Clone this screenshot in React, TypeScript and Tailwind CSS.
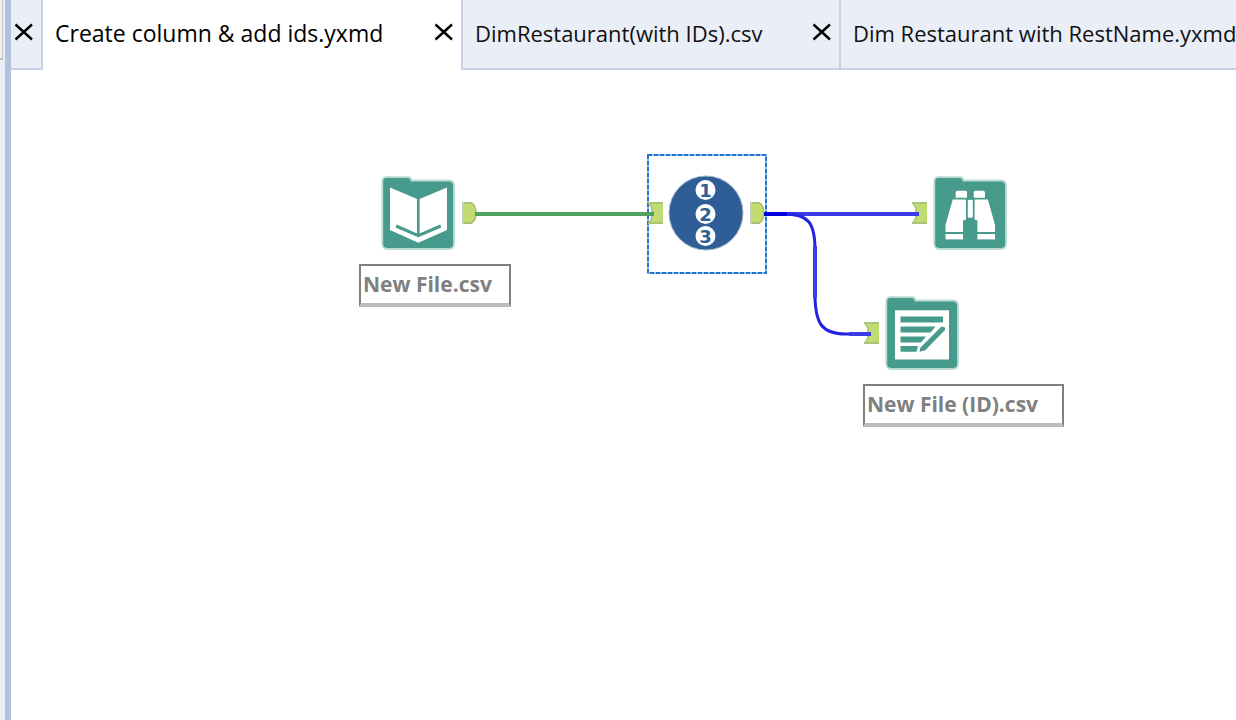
import React from "react";

const tabs = [
  { title: "Create column & add ids.yxmd", active: true, width: "w-[418px]" },
  { title: "DimRestaurant(with IDs).csv", active: false, width: "w-[378px]" },
  { title: "Dim Restaurant with RestName.yxmd", active: false, width: "w-[480px]" },
];

function CloseButton({ label }: { label: string }) {
  return (
    <button type="button" aria-label={label} className="shrink-0">
      <svg width="20" height="20" viewBox="0 0 20 20" fill="none" stroke="#000" strokeWidth="2.4">
        <path d="M2.5 2.5 19 17.5M19 2.5 2.5 17.5" />
      </svg>
    </button>
  );
}

function Folder({ children }: { children: React.ReactNode }) {
  return (
    <svg width="74" height="74" viewBox="0 0 74 74" className="block">
      <path
        d="M5.5 1.2H27Q30 1.2 30.5 4.5H67.5Q73 4.5 73 10V67.5Q73 73 67.5 73H7Q1.3 73 1.3 67.5V5.5Q1.3 1.2 5.5 1.2Z"
        fill="#479b8c"
        stroke="#b9d9d3"
        strokeWidth="1.8"
      />
      {children}
    </svg>
  );
}

function InputDataIcon() {
  return (
    <Folder>
      <path d="M9 11.5 37.3 23.5 66 11.5V54L37.3 66.7 9 54Z" fill="#fff" />
      <path d="M37.3 23V59" stroke="#479b8c" strokeWidth="2.6" />
      <path d="M15 50 37.3 59.7 59.7 50" fill="none" stroke="#479b8c" strokeWidth="3" />
    </Folder>
  );
}

function BrowseIcon() {
  return (
    <Folder>
      <g fill="#fff">
        <path d="M24 14.7H33L34 15.7V21.7H22.7V16Z" />
        <path d="M42 14.7H50.7L52 16V21.7H40.7V15.7Z" />
        <rect x="34.8" y="23.8" width="5" height="18" rx="1.4" />
        <path d="M19.7 23.5H33V43.5L30 44.5V56H12.5V49Z" />
        <path d="M54.9 23.5H41.6V43.5L44.4 44.5V56H62V49Z" />
        <rect x="12.5" y="58" width="17.5" height="5.4" />
        <rect x="44.4" y="58" width="17.6" height="5.4" />
      </g>
    </Folder>
  );
}

function OutputDataIcon() {
  return (
    <Folder>
      <rect x="10" y="14.3" width="54" height="49.2" fill="#fff" />
      <g fill="#479b8c">
        <path d="M15.5 20.6H58V26.6H15.5Z" />
        <path d="M15.5 30.5H50.5L45.5 36.4H15.5Z" />
        <path d="M15.5 40.5H41L36 46.4H15.5Z" />
        <path d="M15.5 50H33L31.5 55.8H15.5Z" />
        <path d="M56.5 30.5 60 31.5V34L40 54.5 34.5 55.8 35.5 51.5Z" />
      </g>
    </Folder>
  );
}

function RecordIdIcon() {
  return (
    <svg width="76" height="76" viewBox="0 0 76 76" className="block">
      <circle cx="38" cy="38" r="37" fill="#2e5e95" stroke="#9eb2cc" strokeWidth="1" />
      {[15, 39, 61].map((y, i) => (
        <g key={y}>
          <circle cx="37.5" cy={y} r="10" fill="#fff" />
          <text
            x="37.5"
            y={y + 6.5}
            textAnchor="middle"
            fontSize="18"
            fontWeight="700"
            fill="#2e5e95"
            className="font-['DejaVu_Sans',sans-serif]"
          >
            {i + 1}
          </text>
        </g>
      ))}
    </svg>
  );
}

function Connections() {
  return (
    <svg
      width="1000"
      height="400"
      viewBox="0 0 1000 400"
      className="pointer-events-none absolute left-0 top-0"
      fill="none"
      aria-hidden="true"
    >
      {[
        [451, 132],
        [739, 132],
      ].map(([x, y]) => (
        <g key={x} transform={`translate(${x} ${y})`}>
          <path d="M1 1H10Q14 5 14 11T10 21H1Z" fill="#c2dc74" />
          <path d="M0 1H10M0 21H10" stroke="#a9c07a" strokeWidth="2" />
          <path d="M1 0V22" stroke="#c5cdb4" strokeWidth="2" />
          <path d="M10 1Q14 5 14 11T10 21" stroke="#a5c268" strokeWidth="1.6" />
        </g>
      ))}
      {[
        [637, 132],
        [901, 132],
        [853, 252],
      ].map(([x, y]) => (
        <g key={`${x}-${y}`} transform={`translate(${x} ${y})`}>
          <path d="M0 0H15V22H0L3 17V5Z" fill="#c2dc74" />
          <path d="M0 1H15M0 21H15" stroke="#a9c475" strokeWidth="2" />
          <path d="M1 1 4 6V16L1 21" stroke="#a9c475" strokeWidth="1.5" />
        </g>
      ))}
      <path d="M464 144H643" stroke="#50a35e" strokeWidth="4" />
      <path d="M753 144H908" stroke="#3b3be9" strokeWidth="4" />
      <path
        d="M753 144H773C797 144 804 152 804 180V224C804 254 811 264 835 264H860"
        stroke="#2222e2"
        strokeWidth="3"
      />
      <path d="M753 144H776" stroke="#0000e0" strokeWidth="4" />
      <path d="M838 264H860M804 176V228" stroke="#3b3be9" strokeWidth="4" />
    </svg>
  );
}

function Annotation({ text, place }: { text: string; place: string }) {
  return (
    <div
      className={`absolute h-[43px] whitespace-nowrap border-2 border-b-4 border-[#808080] border-b-[#bcbcbc] bg-white pl-0.5 text-[21px] leading-9 font-bold text-[#808080] ${place}`}
    >
      {text}
    </div>
  );
}

export default function App() {
  return (
    <div className="flex h-screen overflow-hidden bg-white font-['Open_Sans',sans-serif] text-black">
      <aside className="w-[5px] shrink-0 bg-[#e8edf6]">
        <div className="h-[60px] w-[3px] border-r border-b-2 border-[#c3c3c5] bg-[#f0f0f0]" />
      </aside>
      <div className="w-1.5 shrink-0 bg-[#b3c0de]" />
      <div className="flex min-w-0 flex-1 flex-col">
        <header role="tablist" className="flex h-[70px] shrink-0 overflow-hidden">
          <div className="flex w-8 shrink-0 items-center border-r-2 border-b-2 border-[#c9d1e5] bg-[#e9eef7] pb-1 pl-0.5">
            <CloseButton label="Close previous tab" />
          </div>
          {tabs.map((tab) => (
            <div
              key={tab.title}
              className={`flex shrink-0 items-center justify-between border-b-2 pr-2 pb-1 pl-3 leading-8 ${tab.width} ${
                tab.active
                  ? "border-white bg-white text-[23px]"
                  : "border-l-2 border-[#c9d1e5] bg-[#e9eef7] text-[22px] text-[#111]"
              }`}
            >
              <button type="button" role="tab" aria-selected={tab.active} className="pt-0.5 whitespace-nowrap">
                {tab.title}
              </button>
              <CloseButton label={`Close ${tab.title}`} />
            </div>
          ))}
        </header>

        <main className="relative flex-1 overflow-hidden bg-white">
          <svg className="absolute left-[636px] top-[84px]" width="120" height="120" fill="none" aria-hidden="true">
            <rect x="1" y="1" width="118" height="118" stroke="#8fc0f0" strokeWidth="2" />
            <rect x="1" y="1" width="118" height="118" stroke="#2472cf" strokeWidth="2" strokeDasharray="4 2" />
          </svg>
          <Connections />
          <div className="absolute left-[370px] top-[106px]">
            <InputDataIcon />
          </div>
          <div className="absolute left-[657px] top-[105px]">
            <RecordIdIcon />
          </div>
          <div className="absolute left-[922px] top-[106px]">
            <BrowseIcon />
          </div>
          <div className="absolute left-[874px] top-[226px]">
            <OutputDataIcon />
          </div>
          <Annotation text="New File.csv" place="left-[348px] top-[194px] w-[152px]" />
          <Annotation text="New File (ID).csv" place="left-[852px] top-[314px] w-[201px]" />
        </main>
      </div>
    </div>
  );
}
